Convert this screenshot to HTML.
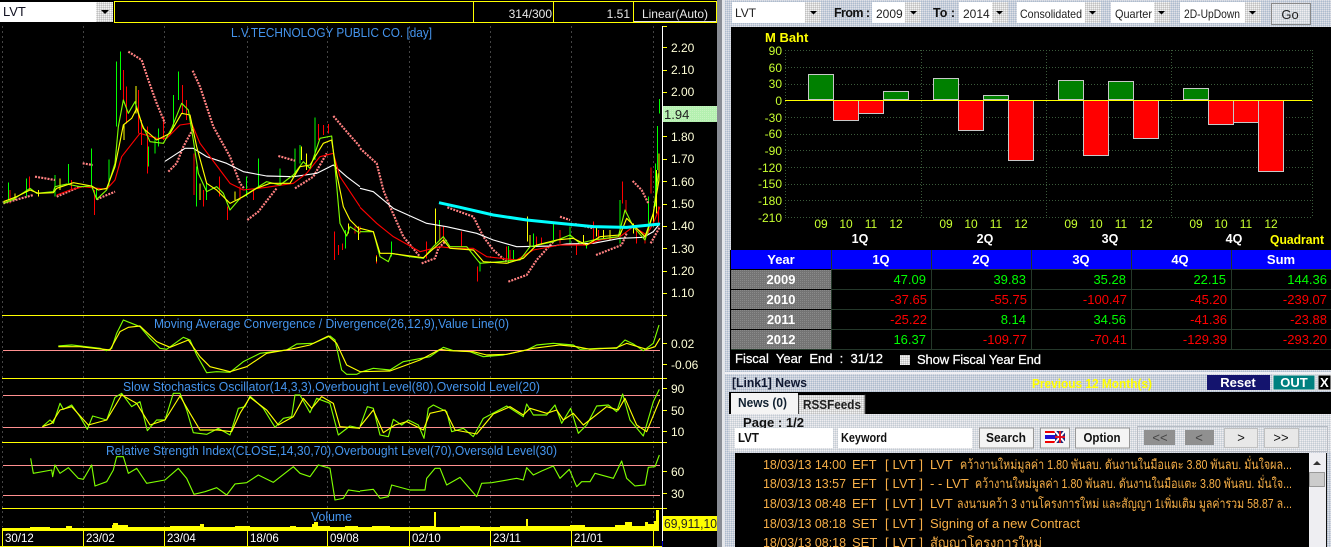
<!DOCTYPE html>
<html><head><meta charset="utf-8"><title>LVT</title>
<style>
html,body{margin:0;padding:0;background:#000;width:1331px;height:547px;overflow:hidden}
svg{display:block}
text{font-family:"Liberation Sans","DejaVu Sans","Noto Sans CJK SC",sans-serif;font-size:13px}
.lab{fill:#ffffd8;font-size:12px}
.ttl{fill:#4595ee;font-size:13px}
.dat{fill:#fff;font-size:11.5px}
.tk{fill:#c8ff30;font-size:12px}
.q{fill:#fff;font-weight:bold;font-size:12.5px;text-anchor:middle}
.hd{fill:#fff;font-weight:bold;text-anchor:middle;font-size:13px}
.g{fill:#00ff00;text-anchor:end}
.r{fill:#ff0000;text-anchor:end}
.cmb{fill:#222;font-size:12px}
.b{fill:#111;font-weight:bold;font-size:12.5px}
.n{fill:#f8b048;font-size:13px}
.c{fill:none;stroke-width:3;shape-rendering:crispEdges}
.l{fill:none;stroke-width:3.4;stroke-linejoin:round}
.w{fill:none;stroke-width:3.4;stroke-linejoin:round}
.p{fill:none;stroke:#ff8080;stroke-width:6.500;stroke-dasharray:6 3.500}
</style></head><body>
<svg width="1331" height="547" viewBox="0 0 1331 547" xmlns="http://www.w3.org/2000/svg">
<defs>
<pattern id="d" width="2" height="2" patternUnits="userSpaceOnUse"><rect width="2" height="2" fill="#c6cedc"/><rect width="1" height="1" fill="#e2e2e6"/><rect x="1" y="1" width="1" height="1" fill="#aebccc"/></pattern>
<pattern id="e" width="2" height="2" patternUnits="userSpaceOnUse"><rect width="2" height="2" fill="#d8dce2"/><rect width="1" height="1" fill="#f0eef0"/><rect x="1" y="1" width="1" height="1" fill="#c4ccd4"/></pattern>
<pattern id="a" width="2" height="2" patternUnits="userSpaceOnUse"><rect width="2" height="2" fill="#d8d8d8"/><rect width="1" height="1" fill="#f4f4f4"/><rect x="1" y="1" width="1" height="1" fill="#c0c0c0"/></pattern>
<pattern id="h" width="2" height="2" patternUnits="userSpaceOnUse"><rect width="2" height="2" fill="#747474"/><rect width="1" height="1" fill="#8a8a8a"/></pattern>
<pattern id="m" width="2" height="2" patternUnits="userSpaceOnUse"><rect width="2" height="2" fill="#b4f0b0"/><rect width="1" height="1" fill="#c8f4c0"/></pattern>
</defs>
<rect width="1331" height="547" fill="#000"/>

<!-- LEFT: toolbar -->
<rect x="0" y="2" width="96" height="20" fill="#fff"/>
<rect x="96" y="2" width="17" height="20" fill="url(#a)"/>
<path d="M101 10h8l-4 4z" fill="#000"/>
<text x="3" y="16" fill="#112" font-size="12">LVT</text>
<rect x="114.500" y="1.500" width="602" height="21" fill="#000" stroke="#ffff00"/>
<path d="M473.500 2V22M553.500 2V22M633.500 2V22" stroke="#ffff00"/>
<rect x="634" y="21" width="82" height="1" fill="#e0e0e0"/>
<text class="lab" x="552" y="18" text-anchor="end" style="fill:#e8e8e8">314/300</text>
<text class="lab" x="630" y="18" text-anchor="end" style="fill:#e8e8e8">1.51</text>
<text class="lab" x="675" y="18" text-anchor="middle" style="fill:#e8e8e8">Linear(Auto)</text>

<!-- vertical dashed grid -->
<path d="M2.500 26V527M83.500 26V527M164.500 26V527M247.500 26V527M327.500 26V527M409.500 26V527M490.500 26V527M571.500 26V527M653.500 26V527" stroke="#444" stroke-dasharray="2 3"/>

<!-- panel separators -->
<path d="M2 315.500H662M2 378.500H662M2 442.500H662M2 508.500H662" stroke="#ffff00"/>
<!-- indicator level lines -->
<path d="M3 350.500H660M3 395.500H660M3 427.500H660M3 465.500H660M3 495.500H660" stroke="#ff9090"/>

<!-- titles -->
<text class="ttl" x="231" y="37" textLength="201" lengthAdjust="spacingAndGlyphs">L.V.TECHNOLOGY PUBLIC CO. [day]</text>
<text class="ttl" x="154" y="328" textLength="355" lengthAdjust="spacingAndGlyphs">Moving Average Convergence / Divergence(26,12,9),Value Line(0)</text>
<text class="ttl" x="123" y="391" textLength="417" lengthAdjust="spacingAndGlyphs">Slow Stochastics Oscillator(14,3,3),Overbought Level(80),Oversold Level(20)</text>
<text class="ttl" x="106" y="455" textLength="451" lengthAdjust="spacingAndGlyphs">Relative Strength Index(CLOSE,14,30,70),Overbought Level(70),Oversold Level(30)</text>
<text class="ttl" x="311" y="521" textLength="41" lengthAdjust="spacingAndGlyphs">Volume</text>

<!-- price panel, left half, zoom coords -->
<g transform="scale(.33333)">
<path class="c" stroke="#00ff00" d="M350 185V380M361 155V270M25 548V600M80 535V590M165 525V590M205 492V550M275 445V560M327 478V560M445 440V500M535 215V300M520 285V380M590 500V620M620 550V600M775 475V560M740 530V590M840 505V555M885 445V525M945 352V480M900 435V490M1037 690V745M290 565V600M475 385V440M465 410V460"/>
<path class="c" stroke="#ff0000" d="M370 210V300M380 260V370M415 270V400M425 360V435M442 380V520M547 255V340M560 300V360M582 460V585M610 570V620M658 530V590M682 620V660M720 560V600M283 570V645M1004 695V780M955 372V420M985 372V400M970 375V405M1015 735V765M1028 730V750M1065 680V700M30 570V610M88 530V570M490 350V420M215 540V570M760 565V600"/>
<path class="c" stroke="#ffff00" d="M372 375V420M408 258V340M600 550V600M705 575V600M920 460V510M905 440V480M1045 670V700M1075 680V720M115 570V590M45 580V600M180 535V570"/>
<path class="p" d="M10 610L100 585M170 590L240 560M105 530L165 540M248 490L278 495M290 598L345 575M385 155L425 180L445 240L470 310L495 370M505 515L530 490L550 440L580 385M578 212L600 260L640 380L690 470L720 550L732 565M742 660L775 635L810 590L830 565M835 468L885 482M885 565L940 530L980 460M1000 348L1040 395L1080 440"/>
<polyline class="w" stroke="#fff" points="495,484 555,445 580,445 620,470 680,490 730,515 800,528 880,530 950,520 1000,495 1040,530 1080,560"/>
<polyline class="l" stroke="#ff0000" points="170,585 210,570 250,560 320,568 345,540 365,470 420,400 470,415 500,415 540,375 575,370 600,430 660,510 690,550 730,570 800,562 880,550 920,520 960,470 1000,460 1020,530 1080,620"/>
<polyline class="l" stroke="#7fff00" points="10,610 40,598 90,565 110,580 160,575 165,560 200,552 240,560 275,558 290,598 320,570 345,490 355,380 370,300 385,340 405,305 425,370 450,425 490,430 515,385 545,310 565,330 580,420 595,520 620,575 650,560 670,580 690,630 720,595 760,570 800,545 840,555 880,525 910,485 930,505 960,415 995,408 1005,500 1020,670 1040,708 1050,680 1080,700"/>
<polyline class="l" stroke="#ffff00" points="10,605 50,590 90,570 115,580 160,578 170,565 220,548 275,558 295,570 320,565 345,500 370,375 395,355 410,325 430,385 470,420 510,400 545,340 570,345 590,440 620,550 650,570 690,610 730,590 770,565 810,550 870,550 900,500 930,495 970,430 995,420 1010,520 1030,620 1050,660 1080,690"/>
</g>
<!-- price panel, right half -->
<g transform="translate(360) scale(.33333)">
<path class="c" stroke="#00ff00" d="M238 660V720M445 738V790M360 785V815M95 725V770M460 750V780M580 670V720M630 680V730M780 600V730M865 590V700M893 378V510M887 490V620M899 297V340M520 700V740M680 735V745"/>
<path class="c" stroke="#ff0000" d="M352 800V845M305 695V740M0 680V700M50 765V790M200 725V775M250 680V730M240 680V720M440 740V780M450 750V785M530 710V740M545 712V735M600 690V730M650 730V765M700 665V730M715 690V720M788 545V610M798 600V640M873 503V580M830 680V730M855 700V730M895 620V680"/>
<path class="c" stroke="#ffff00" d="M226 625V730M502 650V725M510 705V740M50 770V785M670 705V735M710 680V710M730 690V715M750 690V720M897 460V540M890 510V640M880 640V680M820 670V700"/>
<path class="p" d="M0 445L50 490L70 570L90 620L130 710L180 770M185 790L225 775L235 745L260 720M262 622L340 650L370 710L400 750L440 785M445 845L500 825L530 780L580 725M600 650L630 660M645 672L700 685M708 765L785 735L800 700M818 543L845 570L865 610M872 730L900 680"/>
<polyline class="w" stroke="#fff" points="0,565 40,575 100,625 200,670 260,680 350,700 400,720 470,740 580,738 620,732 700,730 780,715 850,712 880,695 900,670"/>
<polyline class="l" stroke="#ff0000" points="0,622 50,670 100,710 180,755 240,740 280,745 340,745 380,770 470,780 520,750 600,735 680,735 720,720 780,710 820,680 860,705 880,670 900,620"/>
<polyline class="l" stroke="#7fff00" points="0,695 40,695 60,770 85,785 95,760 150,770 190,775 220,740 250,710 270,740 320,740 360,790 420,785 480,780 510,740 580,725 630,705 660,730 700,720 775,710 795,630 820,680 855,720 880,640 895,520"/>
<polyline class="l" stroke="#ffff00" points="0,685 40,695 60,760 90,760 190,773 250,720 270,745 340,750 370,785 440,790 490,775 530,735 590,720 640,715 680,735 720,710 780,705 800,655 855,710 880,640 897,540"/>
<polyline fill="none" stroke="#00ffff" style="stroke-width:9" points="237,608 300,622 400,645 500,660 600,670 700,680 800,682 900,672"/>
</g>

<!-- lower indicators, left -->
<g transform="translate(0,310) scale(.33333)">
<polyline class="l" stroke="#7fff00" points="175,108 215,105 300,115 320,122 335,115 350,70 370,30 395,40 420,50 450,85 480,115 500,118 550,82 570,90 590,135 620,188 650,185 690,187 730,155 780,130 860,120 890,102 940,100 990,78 1005,90 1025,180 1040,193 1070,193 1080,188"/>
<polyline class="l" stroke="#ffff00" points="175,110 240,110 330,120 360,65 385,52 420,48 470,95 510,112 565,90 600,140 630,170 690,185 740,170 800,130 870,118 930,105 985,78 1010,100 1040,165 1080,185"/>
<polyline class="l" stroke="#7fff00" points="127,350 150,330 160,340 180,280 190,298 215,285 240,320 262,358 278,318 320,330 345,262 365,250 395,290 420,275 442,362 470,330 495,330 520,250 540,250 560,300 580,368 620,373 655,355 690,375 715,295 735,290 750,258 790,295 825,352 850,325 875,320 885,255 900,255 930,308 950,265 990,280 1015,375 1050,348 1080,355"/>
<polyline class="l" stroke="#ffff00" points="127,350 155,340 180,300 215,290 265,345 320,330 365,255 410,280 450,345 495,330 540,258 570,310 600,360 650,360 695,365 720,310 750,262 800,300 835,345 880,320 910,265 935,295 965,260 1000,280 1020,350 1080,355"/>
<polyline class="l" stroke="#7fff00" points="92,445 100,490 155,480 158,500 165,465 180,490 205,473 235,505 250,508 275,465 285,528 320,515 340,480 350,440 370,440 385,490 410,475 440,520 495,510 535,475 560,505 582,553 615,545 650,533 680,555 705,522 740,518 775,495 820,517 880,470 900,490 930,500 955,465 990,475 1005,570 1030,565 1045,540 1080,545"/>
</g>
<!-- lower indicators, right -->
<g transform="translate(360,310) scale(.33333)">
<polyline class="l" stroke="#7fff00" points="0,187 40,175 90,180 130,155 210,140 250,112 280,122 330,125 370,140 430,135 500,120 530,105 580,100 640,105 660,118 720,115 770,115 795,90 820,102 850,122 880,100 897,45"/>
<polyline class="l" stroke="#ffff00" points="0,185 90,183 180,150 240,118 270,122 340,125 380,135 440,133 520,115 600,105 650,110 690,118 770,113 800,100 860,118 885,110 900,85"/>
<polyline class="l" stroke="#7fff00" points="0,350 22,290 40,295 60,375 85,380 100,328 125,345 145,330 175,345 192,385 205,295 220,285 260,305 275,365 310,355 340,380 370,325 440,288 490,320 500,282 520,315 560,315 585,285 605,340 632,295 655,370 680,345 710,288 745,285 770,305 788,252 810,330 850,378 880,275 898,238"/>
<polyline class="l" stroke="#ffff00" points="0,350 40,300 70,368 105,345 140,335 190,360 210,310 255,300 285,360 350,372 400,312 450,290 490,315 510,295 560,310 590,300 610,330 640,310 670,345 740,290 775,300 795,265 830,345 860,365 900,268"/>
<polyline class="l" stroke="#7fff00" points="0,543 40,538 60,565 85,560 95,525 150,540 195,540 200,505 225,475 240,475 260,525 300,502 350,560 365,520 395,518 470,505 490,510 500,473 520,495 545,483 580,468 600,505 628,478 650,530 665,515 690,515 705,490 760,505 785,453 800,505 825,528 855,525 865,472 885,470 898,435"/>
</g>

<!-- volume -->
<path fill="#ffff00" d="M2 531V528H30V527H50V528H66V526H72V528H112V525H113V523H118V525H128V527H170V526H200V524H204V527H235V526H250V527H290V526H296V527H312V524H314V522H318V526H330V527H345V526H358V527H372V526H390V527H420V526H434V512H436V527H460V526H480V527H500V526H526V519H528V526H570V525H585V527H615V525H625V522H632V526H645V522H648V524H654V521H656V510H659V531Z"/>
<rect x="0" y="546" width="662" height="1" fill="#ffff00"/>
<path d="M2.500 531V546M83.500 531V546M164.500 531V546M247.500 531V546M327.500 531V546M409.500 531V546M490.500 531V546M571.500 531V546M653.500 531V546" stroke="#ffff00"/>
<text class="dat" x="5" y="542">30/12</text>
<text class="dat" x="86" y="542">23/02</text>
<text class="dat" x="167" y="542">23/04</text>
<text class="dat" x="250" y="542">18/06</text>
<text class="dat" x="330" y="542">09/08</text>
<text class="dat" x="412" y="542">02/10</text>
<text class="dat" x="493" y="542">23/11</text>
<text class="dat" x="574" y="542">21/01</text>

<!-- axis -->
<rect x="662" y="26" width="1" height="520" fill="#fff"/>
<rect x="662" y="541" width="1" height="6" fill="#0000c0"/>
<path d="M663 26.500H667M663 47.500H667M663 70.500H667M663 92.500H667M663 136.500H667M663 159.500H667M663 181.500H667M663 204.500H667M663 226.500H667M663 248.500H667M663 271.500H667M663 293.500H667M663 315.500H667M663 343.500H667M663 364.500H667M663 378.500H667M663 388.500H667M663 410.500H667M663 431.500H667M663 442.500H667M663 471.500H667M663 493.500H667M663 508.500H667" stroke="#ffff00"/>
<g class="ax">
<text class="lab" x="671" y="52">2.20</text>
<text class="lab" x="671" y="74">2.10</text>
<text class="lab" x="671" y="96">2.00</text>
<text class="lab" x="671" y="141">1.80</text>
<text class="lab" x="671" y="163">1.70</text>
<text class="lab" x="671" y="186">1.60</text>
<text class="lab" x="671" y="208">1.50</text>
<text class="lab" x="671" y="230">1.40</text>
<text class="lab" x="671" y="253">1.30</text>
<text class="lab" x="671" y="275">1.20</text>
<text class="lab" x="671" y="297">1.10</text>
<text class="lab" x="671" y="348">0.02</text>
<text class="lab" x="671" y="369">-0.06</text>
<text class="lab" x="671" y="393">90</text>
<text class="lab" x="671" y="415">50</text>
<text class="lab" x="671" y="436">10</text>
<text class="lab" x="671" y="476">60</text>
<text class="lab" x="671" y="498">30</text>
</g>
<rect x="663" y="106" width="54" height="16" fill="url(#m)"/>
<text x="664" y="119" fill="#222" font-size="12">1.94</text>
<rect x="663" y="516" width="54" height="15" fill="#ffff00"/>
<text x="664" y="528" fill="#222" font-size="12" textLength="53" lengthAdjust="spacingAndGlyphs">69,911,10</text>

<!-- divider between panes -->
<rect x="717" y="0" width="5" height="547" fill="#888c94"/>
<rect x="722" y="0" width="3" height="547" fill="#e4e6ea"/>

<!-- RIGHT background -->
<rect x="725" y="0" width="606" height="547" fill="url(#d)"/>

<!-- right top combos -->
<rect x="732" y="2" width="73" height="21" fill="#fff"/>
<rect x="805" y="2" width="16" height="21" fill="url(#a)"/>
<text class="cmb" x="735" y="17">LVT</text>
<text class="b" x="834" y="17" textLength="36">From :</text>
<rect x="872" y="2" width="33" height="21" fill="#fff"/>
<rect x="905" y="2" width="16" height="21" fill="url(#a)"/>
<text class="cmb" x="876" y="18">2009</text>
<text class="b" x="933" y="17" textLength="22">To :</text>
<rect x="959" y="2" width="33" height="21" fill="#fff"/>
<rect x="992" y="2" width="16" height="21" fill="url(#a)"/>
<text class="cmb" x="963" y="18">2014</text>
<rect x="1017" y="2" width="68" height="21" fill="#fff"/>
<rect x="1085" y="2" width="16" height="21" fill="url(#a)"/>
<text class="cmb" x="1020" y="18" textLength="62" lengthAdjust="spacingAndGlyphs">Consolidated</text>
<rect x="1111" y="2" width="43" height="21" fill="#fff"/>
<rect x="1154" y="2" width="16" height="21" fill="url(#a)"/>
<text class="cmb" x="1115" y="18" textLength="37" lengthAdjust="spacingAndGlyphs">Quarter</text>
<rect x="1180" y="2" width="65" height="21" fill="#fff"/>
<rect x="1245" y="2" width="16" height="21" fill="url(#a)"/>
<text class="cmb" x="1184" y="18" textLength="56" lengthAdjust="spacingAndGlyphs">2D-UpDown</text>
<path d="M810 11h7l-3.500 3.500zM910 11h7l-3.500 3.500zM996 11h7l-3.500 3.500zM1089 11h7l-3.500 3.500zM1158 11h7l-3.500 3.500zM1249 11h7l-3.500 3.500z" fill="#000"/>
<rect x="1271.500" y="3.500" width="39" height="21" fill="url(#e)" stroke="#888"/>
<text x="1290" y="19" text-anchor="middle" fill="#222" font-size="12">Go</text>

<!-- bar chart -->
<rect x="731" y="27" width="600" height="223" fill="#000"/>
<text x="765" y="42" fill="#ffff00" font-weight="bold" font-size="12.500">M Baht</text>
<path d="M785 50.500H1312M785 67.500H1312M785 84.500H1312M785 117.500H1312M785 134.500H1312M785 150.500H1312M785 167.500H1312M785 184.500H1312M785 200.500H1312M785 217.500H1312M785.500 50V217M921.500 50V217M1046.500 50V217M1171.500 50V217M1312.500 50V217" stroke="#3a5a3a" stroke-dasharray="1 2"/>
<g fill="#008000" stroke="#c8c8c8">
<rect x="808.500" y="74.500" width="25" height="25"/><rect x="883.500" y="91.500" width="25" height="8"/>
<rect x="933.500" y="78.500" width="25" height="21"/><rect x="983.500" y="95.500" width="25" height="4"/>
<rect x="1058.500" y="80.500" width="25" height="19"/><rect x="1108.500" y="81.500" width="25" height="18"/>
<rect x="1183.500" y="88.500" width="25" height="11"/>
</g>
<g fill="#ff0000" stroke="#c8c8c8">
<rect x="833.500" y="100.500" width="25" height="20"/><rect x="858.500" y="100.500" width="25" height="13"/>
<rect x="958.500" y="100.500" width="25" height="30"/><rect x="1008.500" y="100.500" width="25" height="60"/>
<rect x="1083.500" y="100.500" width="25" height="55"/><rect x="1133.500" y="100.500" width="25" height="38"/>
<rect x="1208.500" y="100.500" width="25" height="24"/><rect x="1233.500" y="100.500" width="25" height="22"/><rect x="1258.500" y="100.500" width="25" height="71"/>
</g>
<rect x="785" y="100" width="527" height="1" fill="#ffff00"/>
<g text-anchor="end">
<text class="tk" x="782" y="55">90</text><text class="tk" x="782" y="72">60</text><text class="tk" x="782" y="88">30</text><text class="tk" x="782" y="105">0</text><text class="tk" x="782" y="122">-30</text><text class="tk" x="782" y="138">-60</text><text class="tk" x="782" y="155">-90</text><text class="tk" x="782" y="172">-120</text><text class="tk" x="782" y="188">-150</text><text class="tk" x="782" y="205">-180</text><text class="tk" x="782" y="222">-210</text>
</g>
<g text-anchor="middle">
<text class="tk" x="821" y="228">09</text><text class="tk" x="846" y="228">10</text><text class="tk" x="871" y="228">11</text><text class="tk" x="896" y="228">12</text>
<text class="tk" x="946" y="228">09</text><text class="tk" x="971" y="228">10</text><text class="tk" x="996" y="228">11</text><text class="tk" x="1021" y="228">12</text>
<text class="tk" x="1071" y="228">09</text><text class="tk" x="1096" y="228">10</text><text class="tk" x="1121" y="228">11</text><text class="tk" x="1146" y="228">12</text>
<text class="tk" x="1196" y="228">09</text><text class="tk" x="1221" y="228">10</text><text class="tk" x="1246" y="228">11</text><text class="tk" x="1271" y="228">12</text>
</g>
<text class="q" x="860" y="243">1Q</text><text class="q" x="985" y="243">2Q</text><text class="q" x="1110" y="243">3Q</text><text class="q" x="1234" y="243">4Q</text>
<text x="1270" y="244" fill="#ffff00" font-weight="bold" font-size="12" textLength="54" lengthAdjust="spacingAndGlyphs">Quadrant</text>

<!-- table -->
<rect x="730" y="250" width="601" height="120" fill="#000"/>
<rect x="731" y="250" width="600" height="19" fill="#0000ff"/>
<rect x="731" y="270" width="100" height="19" fill="url(#h)"/>
<rect x="731" y="290" width="100" height="19" fill="url(#h)"/>
<rect x="731" y="310" width="100" height="19" fill="url(#h)"/>
<rect x="731" y="330" width="100" height="19" fill="url(#h)"/>
<path d="M831.500 250V349M931.500 250V349M1031.500 250V349M1131.500 250V349M1231.500 250V349M831 269.500H1331M831 289.500H1331M831 309.500H1331M831 329.500H1331M731 349.500H1331" stroke="#24382a"/>
<text class="hd" x="781" y="264">Year</text><text class="hd" x="881" y="264">1Q</text><text class="hd" x="981" y="264">2Q</text><text class="hd" x="1081" y="264">3Q</text><text class="hd" x="1180" y="264">4Q</text><text class="hd" x="1281" y="264">Sum</text>
<text class="hd" x="781" y="284">2009</text><text class="hd" x="781" y="304">2010</text><text class="hd" x="781" y="324">2011</text><text class="hd" x="781" y="344">2012</text>
<text class="g" x="926" y="284">47.09</text><text class="g" x="1026" y="284">39.83</text><text class="g" x="1126" y="284">35.28</text><text class="g" x="1226" y="284">22.15</text><text class="g" x="1327" y="284">144.36</text>
<text class="r" x="927" y="304">-37.65</text><text class="r" x="1027" y="304">-55.75</text><text class="r" x="1127" y="304">-100.47</text><text class="r" x="1227" y="304">-45.20</text><text class="r" x="1327" y="304">-239.07</text>
<text class="r" x="927" y="324">-25.22</text><text class="g" x="1026" y="324">8.14</text><text class="g" x="1126" y="324">34.56</text><text class="r" x="1227" y="324">-41.36</text><text class="r" x="1327" y="324">-23.88</text>
<text class="g" x="926" y="344">16.37</text><text class="r" x="1027" y="344">-109.77</text><text class="r" x="1127" y="344">-70.41</text><text class="r" x="1227" y="344">-129.39</text><text class="r" x="1327" y="344">-293.20</text>
<text x="735" y="363" fill="#fff" stroke="#fff" stroke-width=".25" font-size="12" textLength="148" lengthAdjust="spacing" style="white-space:pre">Fiscal  Year  End  :  31/12</text>
<rect x="900" y="355" width="10" height="10" fill="url(#a)"/>
<text x="917" y="364" fill="#fff" stroke="#fff" stroke-width=".25" font-size="12" textLength="124" lengthAdjust="spacing">Show Fiscal Year End</text>

<!-- news panel -->
<rect x="725" y="370" width="606" height="177" fill="url(#d)"/>
<rect x="725" y="372" width="606" height="2" fill="#f0f0f4"/>
<text x="732" y="387" fill="#101830" font-weight="bold" font-size="12" textLength="75" lengthAdjust="spacingAndGlyphs">[Link1] News</text>
<text x="1032" y="388" fill="#ffff00" font-weight="bold" font-size="12.500" textLength="120" lengthAdjust="spacingAndGlyphs">Previous 12 Month(s)</text>
<rect x="1207" y="375" width="63" height="15" fill="#14146e"/>
<text x="1238" y="387" fill="#fff" font-weight="bold" font-size="12" text-anchor="middle">Reset</text>
<rect x="1273" y="375" width="42" height="15" fill="#008080" stroke="#e8e8e8"/>
<text x="1294" y="387" fill="#fff" font-weight="bold" font-size="12" text-anchor="middle">OUT</text>
<rect x="1318" y="375" width="13" height="15" fill="#000" stroke="#e8e8e8"/>
<text x="1320" y="387" fill="#fff" font-weight="bold" font-size="12">X</text>
<rect x="729" y="392" width="602" height="22" fill="#000"/>
<rect x="731" y="393" width="67" height="21" fill="#f4f4f4"/>
<rect x="798" y="395" width="67" height="19" fill="url(#a)"/>
<path d="M798.500 395V414M865 394.500V414" stroke="#444"/>
<text x="738" y="407" fill="#102030" font-weight="bold" font-size="12" textLength="49" lengthAdjust="spacingAndGlyphs">News (0)</text>
<text x="803" y="409" fill="#202020" font-weight="bold" font-size="12" textLength="58" lengthAdjust="spacingAndGlyphs">RSSFeeds</text>
<rect x="729" y="414" width="602" height="38" fill="url(#e)"/>
<text x="743" y="427" fill="#111" font-weight="bold" font-size="12" textLength="61" lengthAdjust="spacingAndGlyphs">Page : 1/2</text>
<rect x="735" y="428" width="98" height="20" fill="#fff"/>
<text x="738" y="442" fill="#111" font-weight="bold" font-size="12" textLength="21" lengthAdjust="spacingAndGlyphs">LVT</text>
<rect x="838" y="428" width="134" height="20" fill="#fff"/>
<text x="841" y="442" fill="#111" font-weight="bold" font-size="12" textLength="46" lengthAdjust="spacingAndGlyphs">Keyword</text>
<rect x="979.500" y="428" width="54" height="20" fill="#f4f4f4" stroke="#999"/>
<text x="1006" y="442" fill="#111" font-weight="bold" font-size="12" text-anchor="middle" textLength="40" lengthAdjust="spacingAndGlyphs">Search</text>
<rect x="1040.500" y="428" width="29" height="20" fill="#f4f4f4" stroke="#999"/>
<rect x="1045" y="431" width="10" height="12" fill="#fff"/>
<rect x="1045" y="431" width="10" height="2" fill="#f00000"/><rect x="1045" y="441" width="10" height="2" fill="#f00000"/><rect x="1045" y="435" width="10" height="4" fill="#2010d0"/>
<rect x="1055" y="431" width="10" height="12" fill="#202878"/>
<path d="M1055 431L1065 443M1065 431L1055 443" stroke="#fff" stroke-width="2"/>
<path d="M1060 431V443M1055 437H1065" stroke="#e01020" stroke-width="2"/>
<rect x="1075.500" y="428" width="54" height="20" fill="#f4f4f4" stroke="#999"/>
<text x="1102" y="442" fill="#111" font-weight="bold" font-size="12" text-anchor="middle" textLength="37" lengthAdjust="spacingAndGlyphs">Option</text>
<rect x="1137.500" y="426.500" width="190" height="25" fill="none" stroke="#b8bcc4"/>
<rect x="1144" y="430" width="31" height="15" fill="#909090"/>
<rect x="1185" y="430" width="29" height="15" fill="#909090"/>
<rect x="1224.500" y="428.500" width="33" height="19" fill="#e8e8e8" stroke="#c0c0c0"/>
<rect x="1264.500" y="428.500" width="34" height="19" fill="#e8e8e8" stroke="#c0c0c0"/>
<text x="1160" y="442" fill="#444" font-size="12" text-anchor="middle">&lt;&lt;</text>
<text x="1199" y="442" fill="#444" font-size="12" text-anchor="middle">&lt;</text>
<text x="1241" y="442" fill="#111" font-size="12" text-anchor="middle">&gt;</text>
<text x="1281" y="442" fill="#111" font-size="12" text-anchor="middle">&gt;&gt;</text>

<!-- news list -->
<rect x="735" y="453" width="574" height="94" fill="#000"/>
<rect x="1309" y="453" width="17" height="94" fill="#eeeef2"/>
<rect x="1326" y="453" width="1" height="94" fill="#111"/>
<path d="M1313 465l4-4 4 4z" fill="#333"/>
<rect x="1309.500" y="472.500" width="15" height="14" fill="#cccccc" stroke="#999"/>
<g class="n">
<text class="n" x="763" y="469" textLength="83" lengthAdjust="spacingAndGlyphs">18/03/13 14:00</text><text class="n" x="852" y="469">EFT</text><text class="n" x="885" y="469" textLength="38">[ LVT ]</text><text class="n" x="930" y="469" font-size="13">LVT</text>
<text x="960" y="469" fill="#f8b048" font-size="11" textLength="332" lengthAdjust="spacingAndGlyphs">คว้างานใหม่มูลค่า 1.80 พันลบ. ดันงานในมือแตะ 3.80 พันลบ. มั่นใจผล...</text>
<text class="n" x="763" y="488" textLength="83" lengthAdjust="spacingAndGlyphs">18/03/13 13:57</text><text class="n" x="852" y="488">EFT</text><text class="n" x="885" y="488" textLength="38">[ LVT ]</text><text class="n" x="930" y="488">- - LVT</text>
<text x="975" y="488" fill="#f8b048" font-size="11" textLength="317" lengthAdjust="spacingAndGlyphs">คว้างานใหม่มูลค่า 1.80 พันลบ. ดันงานในมือแตะ 3.80 พันลบ. มั่นใจ...</text>
<text class="n" x="763" y="508" textLength="83" lengthAdjust="spacingAndGlyphs">18/03/13 08:48</text><text class="n" x="852" y="508">EFT</text><text class="n" x="885" y="508" textLength="38">[ LVT ]</text><text class="n" x="930" y="508">LVT</text>
<text x="957" y="508" fill="#f8b048" font-size="11" textLength="335" lengthAdjust="spacingAndGlyphs">ลงนามคว้า 3 งานโครงการใหม่ และสัญญา 1เพิ่มเติม มูลค่ารวม 58.87 ล...</text>
<text class="n" x="763" y="528" textLength="83" lengthAdjust="spacingAndGlyphs">18/03/13 08:18</text><text class="n" x="852" y="528">SET</text><text class="n" x="885" y="528" textLength="38">[ LVT ]</text><text class="n" x="930" y="528" textLength="150">Signing of a new Contract</text>
<text class="n" x="763" y="547" textLength="83" lengthAdjust="spacingAndGlyphs">18/03/13 08:18</text><text class="n" x="852" y="547">SET</text><text class="n" x="885" y="547" textLength="38">[ LVT ]</text>
<text x="930" y="547" fill="#f8b048" font-size="11">สัญญาโครงการใหม่</text>
</g>
</svg>
</body></html>
